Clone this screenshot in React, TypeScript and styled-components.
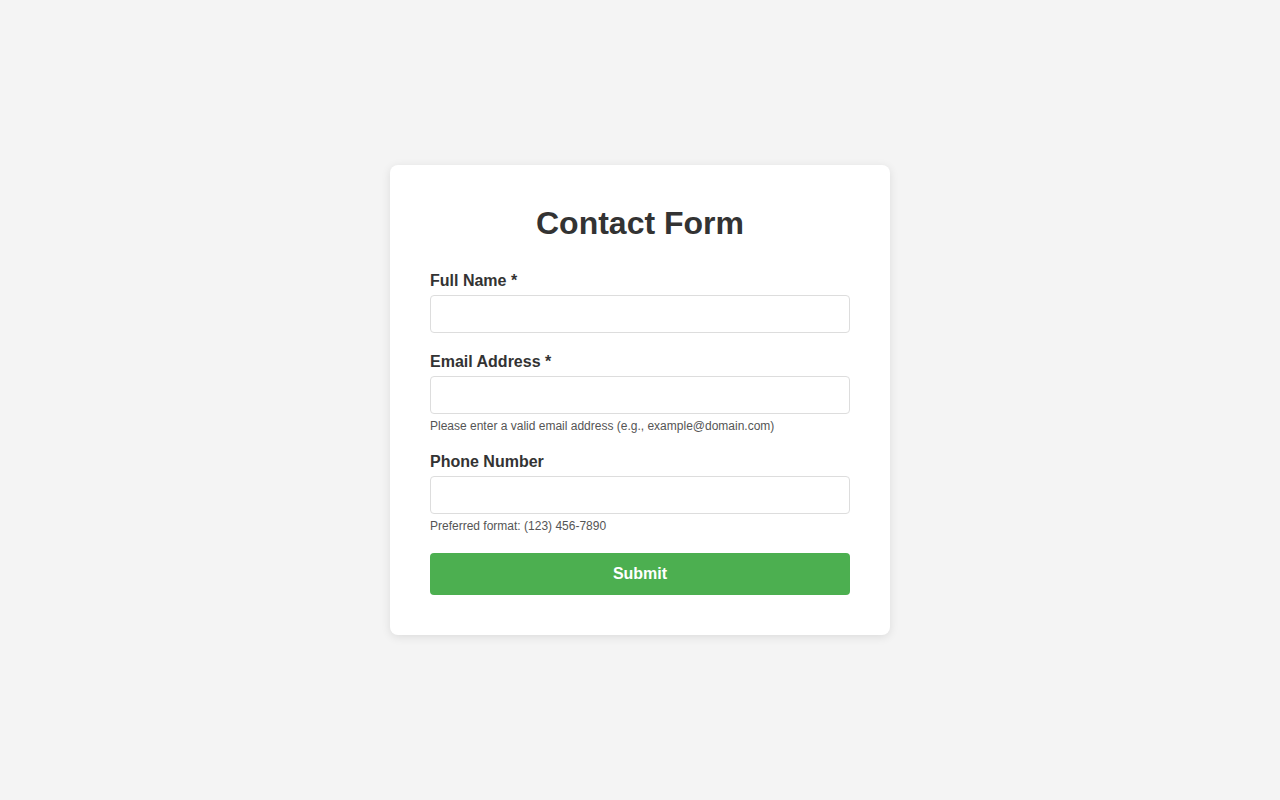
import styled, { createGlobalStyle } from "styled-components";

const GlobalStyle = createGlobalStyle`
  * {
    box-sizing: border-box;
  }

  body {
    margin: 0;
    background: #f4f4f4;
    font-family: "Liberation Sans", Arial, sans-serif;
    color: #333;
  }
`;

interface FieldProps {
  id: string;
  label: string;
  type: string;
  hint?: string;
}

const Field = ({ id, label, type, hint }: FieldProps): JSX.Element => {
  return (
    <Group>
      <Label htmlFor={id}>{label}</Label>
      <Input id={id} type={type} />
      {hint && <Hint>{hint}</Hint>}
    </Group>
  );
};

const App = (): JSX.Element => {
  return (
    <>
      <GlobalStyle />
      <Page>
        <Card onSubmit={(e) => e.preventDefault()}>
          <Title>Contact Form</Title>
          <Field id="name" label="Full Name *" type="text" />
          <Field
            id="email"
            label="Email Address *"
            type="email"
            hint="Please enter a valid email address (e.g., example@domain.com)"
          />
          <Field
            id="phone"
            label="Phone Number"
            type="tel"
            hint="Preferred format: (123) 456-7890"
          />
          <SubmitButton type="submit">Submit</SubmitButton>
        </Card>
      </Page>
    </>
  );
};

const Page = styled.div`
  display: flex;
  justify-content: center;
  align-items: center;
  min-height: 100vh;
`;

const Card = styled.form`
  width: 500px;
  padding: 40px;
  background: #fff;
  border-radius: 8px;
  box-shadow: 0 2px 10px rgba(0, 0, 0, 0.1);
`;

const Title = styled.h1`
  margin: 0 0 30px;
  text-align: center;
  font-size: 32px;
  font-weight: bold;
  color: #333;
`;

const Group = styled.div`
  margin-bottom: 20px;
`;

const Label = styled.label`
  display: block;
  margin-bottom: 5px;
  font-size: 16px;
  font-weight: bold;
  color: #333;
`;

const Input = styled.input`
  display: block;
  width: 100%;
  padding: 10px;
  font-family: inherit;
  font-size: 16px;
  line-height: 16px;
  height: 38px;
  border: 1px solid #ddd;
  border-radius: 4px;
  outline: none;
`;

const Hint = styled.small`
  display: block;
  margin-top: 5px;
  font-size: 12px;
  color: #555;
`;

const SubmitButton = styled.button`
  display: block;
  width: 100%;
  height: 42px;
  padding: 12px;
  border: none;
  border-radius: 4px;
  background: #4caf50;
  color: #fff;
  font-family: inherit;
  font-size: 16px;
  font-weight: bold;
  cursor: pointer;
`;

export default App;
